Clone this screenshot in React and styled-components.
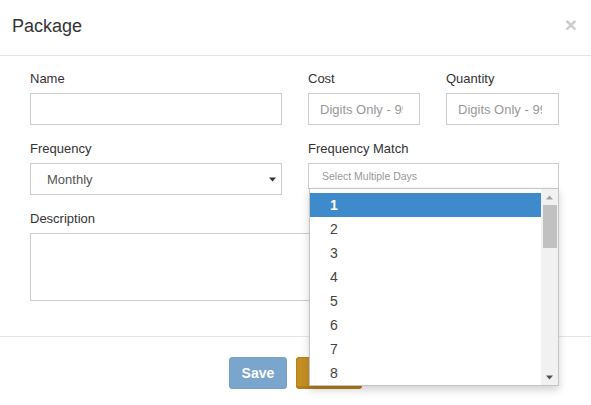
import React from "react";
import styled, { createGlobalStyle } from "styled-components";

const Global = createGlobalStyle`
  html, body { margin: 0; padding: 0; background: #fff; }
  body { font-family: "Liberation Sans", Arial, sans-serif; color: #333; }
  * { box-sizing: border-box; }
`;

const Modal = styled.div`
  width: 591px;
  height: 405px;
  overflow: hidden;
  background: #fff;
  display: flex;
  flex-direction: column;
`;

const Header = styled.div`
  display: flex;
  align-items: flex-start;
  justify-content: space-between;
  padding: 13px 14px 16px 12px;
  border-bottom: 1px solid #e5e5e5;
`;

const Title = styled.h4`
  margin: 0;
  font-size: 18px;
  line-height: 26px;
  font-weight: normal;
  color: #333;
`;

const CloseX = styled.button`
  border: 0;
  background: transparent;
  padding: 0;
  margin-top: 1px;
  font-family: "Liberation Sans", Arial, sans-serif;
  font-size: 21px;
  line-height: 21px;
  font-weight: bold;
  color: #000;
  opacity: 0.2;
  cursor: pointer;
`;

const Body = styled.div`
  padding: 14px 32px 35px 30px;
`;

const FormGrid = styled.div`
  display: grid;
  grid-template-columns: 252px 112px 113px;
  column-gap: 26px;
  row-gap: 15px;
  align-items: start;
`;

const Field = styled.div`
  grid-column: span ${(p) => p.$span || 1};
  display: flex;
  flex-direction: column;
  gap: 5px;
  position: relative;
`;

const Label = styled.label`
  font-size: 13px;
  line-height: 18px;
  color: #333;
`;

const Input = styled.input`
  width: 100%;
  height: 32px;
  border: 1px solid #ccc;
  border-radius: 0;
  padding: 6px 16px 6px 11px;
  font-family: inherit;
  font-size: 13px;
  color: #555;
  outline: none;
  &::placeholder { color: #999; }
`;

const TextArea = styled.textarea`
  width: 100%;
  height: 68px;
  border: 1px solid #ccc;
  border-radius: 0;
  resize: none;
  padding: 6px 11px;
  font-family: inherit;
  font-size: 13px;
  outline: none;
`;

const SelectBox = styled.div`
  height: 32px;
  border: 1px solid #ccc;
  display: flex;
  align-items: center;
  justify-content: space-between;
  padding: 0 5px 0 16px;
  font-size: 13px;
  color: #555;
`;

const MultiBox = styled.div`
  position: relative;
  height: 26px;
  border: 1px solid #ccc;
  display: flex;
  align-items: center;
  padding-left: 13px;
  font-size: 10.5px;
  color: #999;
`;

const Dropdown = styled.div`
  position: absolute;
  top: 24px;
  left: 0;
  width: 250px;
  height: 198px;
  background: #fff;
  border: 1px solid #c4c4c4;
  box-shadow: 0 4px 8px rgba(0, 0, 0, 0.18);
  display: flex;
  z-index: 10;
`;

const Options = styled.ul`
  list-style: none;
  margin: 0;
  padding: 4px 0 0 0;
  flex: 1;
  overflow: hidden;
`;

const Option = styled.li`
  height: 24px;
  line-height: 24px;
  padding-left: 20px;
  font-size: 14px;
  color: ${(p) => (p.$active ? "#fff" : "#444")};
  background: ${(p) => (p.$active ? "#3e8acb" : "transparent")};
  font-weight: ${(p) => (p.$active ? "bold" : "normal")};
`;

const Scrollbar = styled.div`
  width: 17px;
  background: #f1f1f1;
  display: flex;
  flex-direction: column;
`;

const ScrollBtn = styled.div`
  height: 16px;
  display: flex;
  align-items: center;
  justify-content: center;
`;

const Track = styled.div`
  flex: 1;
  padding: 0 1px 0 2px;
`;

const Thumb = styled.div`
  height: 43px;
  background: #c1c1c1;
`;

const Footer = styled.div`
  border-top: 1px solid #e5e5e5;
  padding: 20px 0 16px;
  display: flex;
  justify-content: center;
  gap: 9px;
`;

const Button = styled.button`
  height: 32px;
  padding: 0 ${(p) => p.$padX || 12}px;
  border: 1px solid ${(p) => p.$border};
  border-bottom-width: ${(p) => p.$bottom || 1}px;
  border-radius: 3px;
  background: ${(p) => p.$bg};
  color: #fff;
  font-family: "Liberation Sans", Arial, sans-serif;
  font-size: 14px;
  font-weight: bold;
`;

const Tri = ({ dir = "down", color }) => (
  <svg width="7" height="5" viewBox="0 0 7 5">
    {dir === "down" ? (
      <path d="M0 0.5 L7 0.5 L3.5 4.5 Z" fill={color} />
    ) : (
      <path d="M0 4.5 L7 4.5 L3.5 0.5 Z" fill={color} />
    )}
  </svg>
);

export default function App() {
  const days = [1, 2, 3, 4, 5, 6, 7, 8];
  return (
    <Modal>
      <Global />
      <Header>
        <Title>Package</Title>
        <CloseX>×</CloseX>
      </Header>
      <Body>
        <FormGrid>
          <Field>
            <Label>Name</Label>
            <Input />
          </Field>
          <Field>
            <Label>Cost</Label>
            <Input placeholder="Digits Only - 999999" />
          </Field>
          <Field>
            <Label>Quantity</Label>
            <Input placeholder="Digits Only - 999999" />
          </Field>
          <Field>
            <Label>Frequency</Label>
            <SelectBox>
              <span>Monthly</span>
              <Tri color="#333" />
            </SelectBox>
          </Field>
          <Field $span={2}>
            <Label>Frequency Match</Label>
            <MultiBox>
              Select Multiple Days
              <Dropdown>
                <Options>
                  {days.map((d) => (
                    <Option key={d} $active={d === 1}>
                      {d}
                    </Option>
                  ))}
                </Options>
                <Scrollbar>
                  <ScrollBtn>
                    <Tri dir="up" color="#a3a3a3" />
                  </ScrollBtn>
                  <Track>
                    <Thumb />
                  </Track>
                  <ScrollBtn>
                    <Tri color="#505050" />
                  </ScrollBtn>
                </Scrollbar>
              </Dropdown>
            </MultiBox>
          </Field>
          <Field $span={3}>
            <Label>Description</Label>
            <TextArea />
          </Field>
        </FormGrid>
      </Body>
      <Footer>
        <Button $bg="#7aa6cd" $border="#77a0c4">Save</Button>
        <Button $bg="#c58e22" $border="#b2801d" $bottom={3} $padX={13}>
          Close
        </Button>
      </Footer>
    </Modal>
  );
}
